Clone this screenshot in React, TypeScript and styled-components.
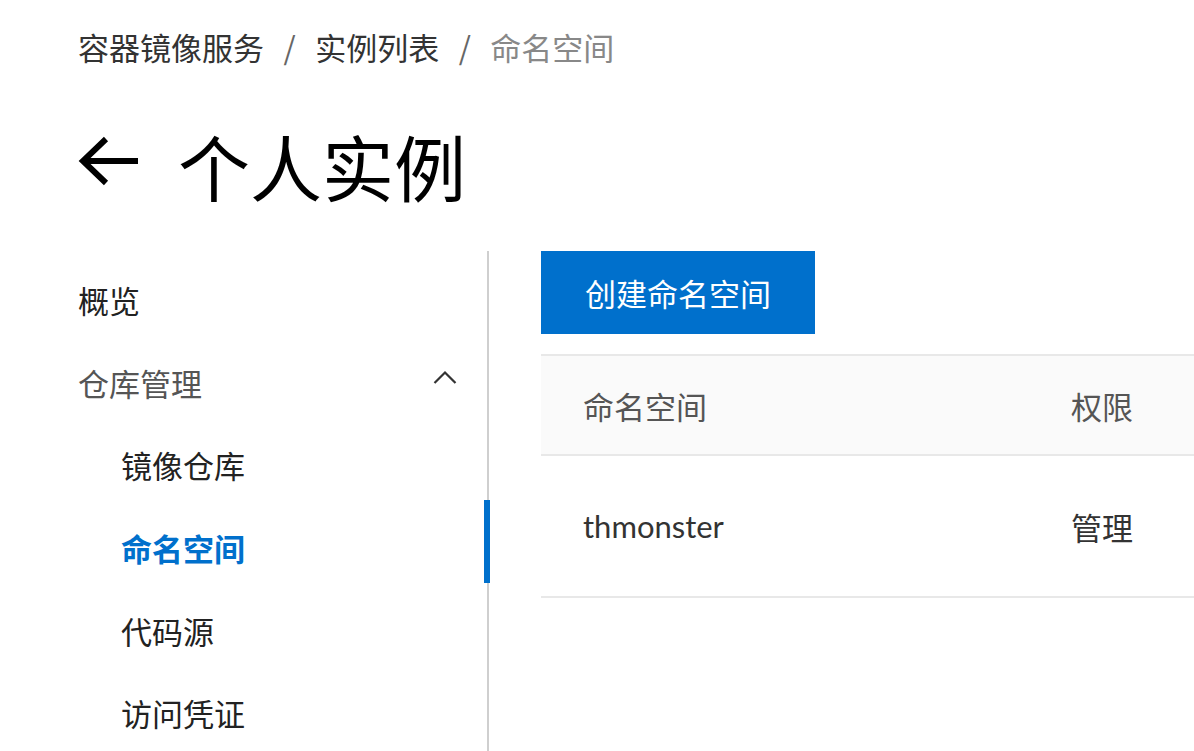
import React from "react";
import styled, { createGlobalStyle } from "styled-components";

const Global = createGlobalStyle`
  html, body { margin: 0; padding: 0; background: #fff; overflow: hidden; }
  body { font-family: "Noto Sans CJK SC", "Microsoft YaHei", sans-serif; color: #222; }
  * { box-sizing: border-box; }
`;

const Page = styled.div`
  width: 1194px;
  height: 751px;
  padding-top: 27px;
  display: flex;
  flex-direction: column;
`;

const Breadcrumb = styled.nav`
  display: flex;
  align-items: center;
  padding-left: 78px;
  font-size: 31px;
  line-height: 40px;
  color: #333;
`;

const Crumb = styled.span<{ $current?: boolean }>`
  color: ${(p) => (p.$current ? "#888" : "#333")};
`;

const Sep = styled.span`
  margin: 0 19.5px;
  color: #666;
`;

const TitleRow = styled.div`
  display: flex;
  align-items: center;
  padding-left: 77px;
  margin-top: 53px;
  height: 90px;
`;

const BackArrow = styled.svg`
  width: 62px;
  height: 50px;
  margin-bottom: 8px;
  margin-right: 39px;
`;

const Title = styled.h1`
  margin: 0;
  font-size: 72px;
  line-height: 90px;
  font-weight: 400;
  color: #000;
`;

const Body = styled.div`
  display: flex;
  margin-top: 41px;
  flex: 1;
`;

const Sidebar = styled.aside`
  margin-left: 78px;
  width: 411px;
  border-right: 2px solid #cfcfcf;
  padding-top: 7px;
  display: flex;
  flex-direction: column;
`;

const NavItem = styled.div<{ $level?: number; $active?: boolean; $muted?: boolean }>`
  position: relative;
  height: 82.7px;
  flex-shrink: 0;
  display: flex;
  align-items: center;
  justify-content: space-between;
  padding-left: ${(p) => (p.$level === 1 ? 43 : 0)}px;
  padding-right: 30px;
  font-size: 31px;
  font-weight: ${(p) => (p.$active ? 700 : 400)};
  color: ${(p) => (p.$active ? "#0070cc" : p.$muted ? "#555" : "#222")};

  ${(p) =>
    p.$active &&
    `
    &::after {
      content: "";
      position: absolute;
      right: -3px;
      top: -6px;
      width: 6px;
      height: 83px;
      background: #0070cc;
    }
  `}
`;

const Chevron = styled.svg`
  width: 24px;
  height: 14px;
  margin-bottom: 10px;
`;

const Content = styled.main`
  flex: 1;
  padding-left: 52px;
  display: flex;
  flex-direction: column;
  align-items: flex-start;
`;

const PrimaryButton = styled.button`
  height: 83px;
  padding: 0 44px;
  border: none;
  background: #0070cc;
  color: #fff;
  font-family: inherit;
  font-size: 31px;
  line-height: 40px;
  cursor: pointer;
`;

const Table = styled.div`
  margin-top: 20px;
  width: 100%;
  border-top: 2px solid #e8e8e8;
`;

const Row = styled.div<{ $head?: boolean }>`
  display: grid;
  grid-template-columns: 488px 1fr;
  height: ${(p) => (p.$head ? 100 : 142)}px;
  align-items: center;
  background: ${(p) => (p.$head ? "#fafafa" : "#fff")};
  border-bottom: 2px solid #e8e8e8;
  font-size: 31px;
  color: ${(p) => (p.$head ? "#555" : "#333")};
`;

const Cell = styled.div`
  padding-left: 42px;
  font-family: Lato, "Noto Sans CJK SC", sans-serif;
`;

export default function App() {
  return (
    <>
      <Global />
      <Page>
        <Breadcrumb>
          <Crumb>容器镜像服务</Crumb>
          <Sep>/</Sep>
          <Crumb>实例列表</Crumb>
          <Sep>/</Sep>
          <Crumb $current>命名空间</Crumb>
        </Breadcrumb>
        <TitleRow>
          <BackArrow viewBox="0 0 62 50">
            <path
              d="M61 25 H7 M29 3 L6 25 L29 47"
              fill="none"
              stroke="#000"
              strokeWidth="6"
            />
          </BackArrow>
          <Title>个人实例</Title>
        </TitleRow>
        <Body>
          <Sidebar>
            <NavItem>概览</NavItem>
            <NavItem $muted>
              仓库管理
              <Chevron viewBox="0 0 24 14">
                <polyline
                  points="1.5,13 12,2.5 22.5,13"
                  fill="none"
                  stroke="#333"
                  strokeWidth="2.2"
                />
              </Chevron>
            </NavItem>
            <NavItem $level={1}>镜像仓库</NavItem>
            <NavItem $level={1} $active>
              命名空间
            </NavItem>
            <NavItem $level={1}>代码源</NavItem>
            <NavItem $level={1}>访问凭证</NavItem>
          </Sidebar>
          <Content>
            <PrimaryButton>创建命名空间</PrimaryButton>
            <Table>
              <Row $head>
                <Cell>命名空间</Cell>
                <Cell>权限</Cell>
              </Row>
              <Row>
                <Cell>thmonster</Cell>
                <Cell>管理</Cell>
              </Row>
            </Table>
          </Content>
        </Body>
      </Page>
    </>
  );
}
